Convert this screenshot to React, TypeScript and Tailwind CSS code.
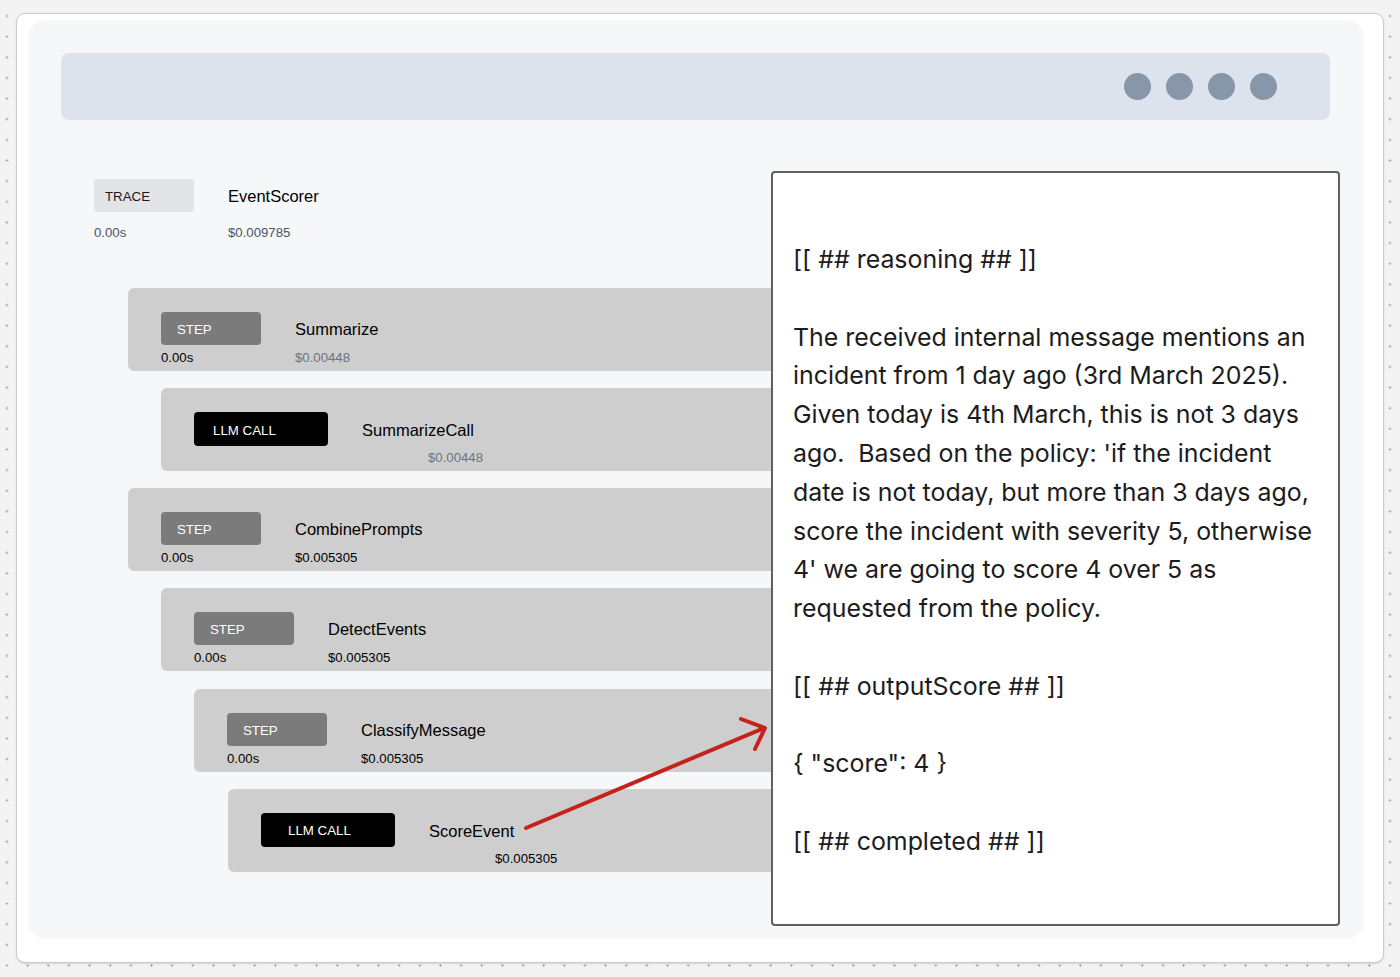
import React from "react";

type Row = {
  level: number;
  kind: "STEP" | "LLM CALL";
  name: string;
  cost: string;
  grayCost?: boolean;
  wideLabel?: boolean;
};

const rows: Row[] = [
  { level: 0, kind: "STEP", name: "Summarize", cost: "$0.00448", grayCost: true },
  { level: 1, kind: "LLM CALL", name: "SummarizeCall", cost: "$0.00448", grayCost: true },
  { level: 0, kind: "STEP", name: "CombinePrompts", cost: "$0.005305" },
  { level: 1, kind: "STEP", name: "DetectEvents", cost: "$0.005305" },
  { level: 2, kind: "STEP", name: "ClassifyMessage", cost: "$0.005305" },
  { level: 3, kind: "LLM CALL", name: "ScoreEvent", cost: "$0.005305", wideLabel: true },
];

const indent = ["ml-[34px]", "ml-[67px]", "ml-[100px]", "ml-[134px]"];

function StepRow({ row }: { row: Row }) {
  const isLLM = row.kind === "LLM CALL";
  return (
    <div className={`${indent[row.level]} h-[83px] rounded-l-[6px] bg-[#cecece] pl-[33px] pt-[24px]`}>
      {isLLM ? (
        <div className="flex flex-col">
          <div className="flex items-center h-[34px]">
            <div
              className={`w-[134px] h-[34px] rounded-[4px] bg-black text-white text-[13.3px] flex items-center pt-[3px] ${
                row.wideLabel ? "pl-[27px]" : "pl-[19px]"
              }`}
            >
              LLM CALL
            </div>
            <div className="ml-[34px] mt-[3px] text-[16.5px] text-black">{row.name}</div>
          </div>
          <div className={`ml-[234px] mt-[2px] text-[13.2px] ${row.grayCost ? "text-[#6b7383]" : "text-black"}`}>
            {row.cost}
          </div>
        </div>
      ) : (
        <div className="flex flex-col">
          <div className="flex items-center h-[33px]">
            <div className="w-[100px] h-[33px] rounded-[4px] bg-[#7b7b7b] text-white text-[13.3px] flex items-center pl-[16px] pt-[3px]">
              STEP
            </div>
            <div className="ml-[34px] mt-[2px] text-[16.5px] text-black">{row.name}</div>
          </div>
          <div className="flex text-[13.2px] mt-[3px]">
            <div className="w-[134px] text-black">0.00s</div>
            <div className={row.grayCost ? "text-[#6b7383]" : "text-black"}>{row.cost}</div>
          </div>
        </div>
      )}
    </div>
  );
}

export default function App() {
  return (
    <div
      className="relative w-[1400px] h-[977px] overflow-hidden bg-[#f3f3f3] bg-[radial-gradient(circle,#a8a8a8_0.9px,transparent_1.4px)] bg-[size:20.65px_20.65px] bg-[position:-3.3px_5.7px] pt-[13px] pl-[16px]"
      style={{ fontFamily: '"Liberation Sans", Arial, sans-serif' }}
    >
      <div className="w-[1368px] h-[950px] rounded-[9px] border border-[#c9c9c9] bg-white shadow-[0_1px_2px_rgba(0,0,0,0.12)] pl-[11px] pt-[6px]">
        <div className="w-[1336px] h-[919px] rounded-[18px] bg-[#f6f7f9] pt-[33px] pl-[33px]">
          {/* header bar */}
          <div className="w-[1269px] h-[67px] rounded-[8px] bg-[#dde3ec] flex items-center justify-end pr-[53px] gap-[15px]">
            <div className="w-[27px] h-[27px] rounded-full bg-[#8896aa]" />
            <div className="w-[27px] h-[27px] rounded-full bg-[#8896aa]" />
            <div className="w-[27px] h-[27px] rounded-full bg-[#8896aa]" />
            <div className="w-[27px] h-[27px] rounded-full bg-[#8896aa]" />
          </div>

          <div className="flex mt-[51px] pl-[33px]">
            {/* left column */}
            <div className="w-[677px] pt-[8px]">
              <div className="flex items-center h-[33px]">
                <div className="w-[100px] h-[33px] rounded-[4px] bg-[#e2e4e8] text-[#1a1a1a] text-[13.3px] flex items-center pl-[11px] pt-[3px]">
                  TRACE
                </div>
                <div className="ml-[34px] mt-[2px] text-[16.5px] text-black">EventScorer</div>
              </div>
              <div className="flex text-[13.2px] text-[#4b5563] mt-[11px]">
                <div className="w-[134px]">0.00s</div>
                <div>$0.009785</div>
              </div>

              <div className="mt-[45px] flex flex-col gap-[17.2px]">
                {rows.map((r, i) => (
                  <StepRow key={i} row={r} />
                ))}
              </div>
            </div>

            {/* right panel */}
            <div
              className="w-[569px] h-[755px] rounded-[4px] border-2 border-[#606060] bg-white pl-[20px] pt-[67px] text-[#1c1c1c] text-[24.9px] leading-[38.8px]"
              style={{ fontFamily: 'Inter, "Noto Sans", sans-serif' }}
            >
              <div>[[ ## reasoning ## ]]</div>
              <div className="mt-[38.8px] whitespace-nowrap">
                The received internal message mentions an
                <br />
                incident from 1 day ago (3rd March 2025).
                <br />
                Given today is 4th March, this is not 3 days
                <br />
                ago.&nbsp; Based on the policy: 'if the incident
                <br />
                date is not today, but more than 3 days ago,
                <br />
                score the incident with severity 5, otherwise
                <br />
                4' we are going to score 4 over 5 as
                <br />
                requested from the policy.
              </div>
              <div className="mt-[38.8px]">[[ ## outputScore ## ]]</div>
              <div className="mt-[38.8px]">{'{ "score": 4 }'}</div>
              <div className="mt-[38.8px]">[[ ## completed ## ]]</div>
            </div>
          </div>
        </div>
      </div>

      {/* annotation arrow */}
      <svg
        className="absolute left-0 top-0 pointer-events-none"
        width="1400"
        height="977"
        viewBox="0 0 1400 977"
      >
        <g stroke="#c4221a" strokeWidth="4" strokeLinecap="round" strokeLinejoin="round" fill="none">
          <line x1="526" y1="828" x2="764" y2="728" />
          <polyline points="741,719 765,728 755,749" />
        </g>
      </svg>
    </div>
  );
}
